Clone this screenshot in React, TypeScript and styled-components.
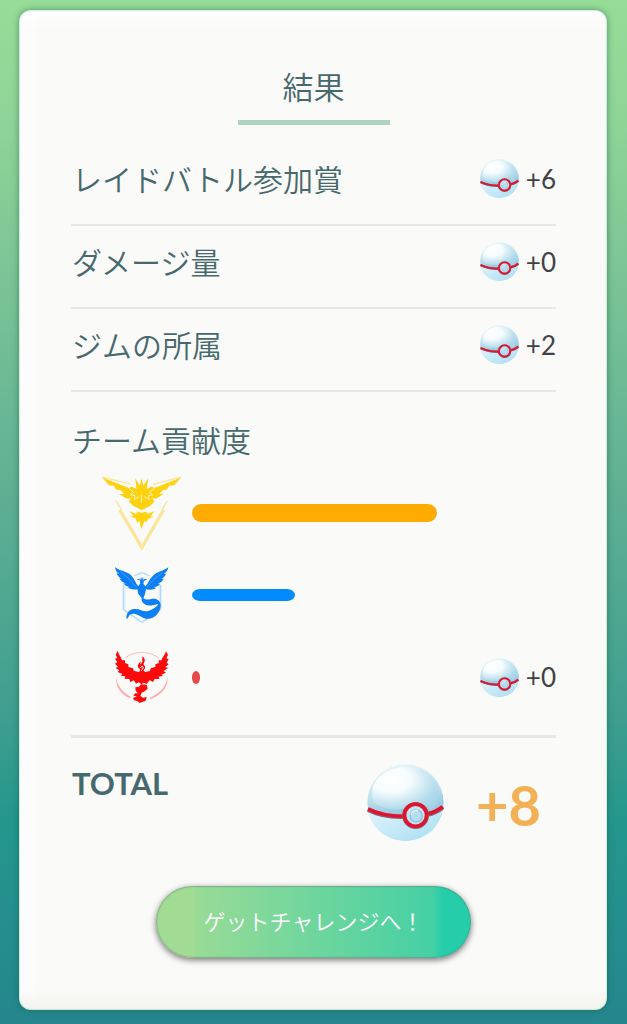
import React from 'react';
import styled, { createGlobalStyle } from 'styled-components';

const GlobalStyle = createGlobalStyle`
  * { box-sizing: border-box; }
  html { min-height: 100%; }
  body {
    margin: 0;
    min-height: 100vh;
    background: linear-gradient(180deg, #97dc97 0%, #8fd497 12%, #7fc796 24%, #5fb093 48%, #3f9e8f 70%, #24978d 80%, #25868d 100%) no-repeat;
    font-family: Lato, "Noto Sans CJK JP", sans-serif;
    color: #47696d;
  }
`;

const Card = styled.main`
  display: flex;
  flex-direction: column;
  margin: 10px 20px 14px 19px;
  padding: 56px 51px 48px 52px;
  min-height: calc(100vh - 24px);
  border-radius: 12px;
  background:
    linear-gradient(180deg, #ffffff 0, rgba(255, 255, 255, 0) 22px),
    linear-gradient(0deg, #f1f3ee 0, rgba(241, 243, 238, 0) 20px),
    linear-gradient(90deg, #fcfcfc 0, #fcfcfc 14px, rgba(252, 252, 252, 0) 20px),
    #fafaf8;
  box-shadow: 0 0 6px rgba(20, 90, 70, 0.55), inset 0 0 1px 1px rgba(190, 225, 205, 0.7);
`;

const Title = styled.h1`
  align-self: center;
  width: 152px;
  height: 59px;
  margin: 0 0 18px;
  border-bottom: 5px solid #aed3bf;
  font-size: 31px;
  line-height: 43px;
  font-weight: 350;
  text-align: center;
`;

const List = styled.ul`
  list-style: none;
  margin: 0;
  padding: 0;
`;

const RewardRow = styled.li`
  display: flex;
  align-items: center;
  justify-content: space-between;
  height: 83px;
  padding-bottom: 10px;
  border-bottom: 2px solid #e8e9e7;
`;

const Label = styled.span`
  padding-left: 1px;
  font-size: 30px;
  line-height: 44px;
  font-weight: 350;
`;

const Award = styled.span`
  display: flex;
  align-items: center;
  justify-content: flex-end;
  gap: 7px;
  color: #404244;
  font-size: 26px;
  line-height: 40px;
`;

const TeamSection = styled.section`
  padding: 26px 0 17px;
  border-bottom: 3px solid #e8e9e7;
`;

const SectionTitle = styled.h2`
  margin: 0 0 10px;
  padding-left: 1px;
  font-size: 30px;
  line-height: 44px;
  font-weight: 350;
`;

const TeamRow = styled.li`
  display: grid;
  grid-template-columns: 121px 1fr 86px;
  align-items: center;
  height: 82px;
`;

const Emblem = styled.span`
  display: flex;
  justify-content: center;
  padding-left: 20px;
`;

const Bar = styled.div<{ $color: string; $height: number; $radius: string }>`
  height: ${(p) => p.$height}px;
  border-radius: ${(p) => p.$radius};
  background: ${(p) => p.$color};
`;

const TotalRow = styled.section`
  display: flex;
  align-items: center;
  height: 128px;
  padding: 0 15px 0 1px;
`;

const TotalLabel = styled.h2`
  flex: 1;
  align-self: flex-start;
  margin: 25px 0 0;
  font-size: 31px;
  line-height: 40px;
  font-weight: 700;
`;

const TotalValue = styled.strong`
  margin-left: 32px;
  padding-top: 6px;
  color: #f3b055;
  font-size: 56px;
  line-height: 64px;
  font-weight: 700;
`;

const ActionButton = styled.button`
  align-self: center;
  width: 315px;
  max-width: 100%;
  height: 72px;
  margin-top: 20px;
  padding: 0;
  border: 0;
  border-radius: 36px;
  background: linear-gradient(90deg, #a2db94 0%, #a2db94 12%, #98db96 13%, #45d0a5 88%, #25cdaa 91%, #25cdaa 100%);
  box-shadow: 0 2px 6px rgba(0, 0, 0, 0.55), inset 0 0 1px 1px rgba(110, 130, 120, 0.5);
  color: #ffffff;
  font-family: inherit;
  font-size: 22px;
  line-height: 32px;
  font-weight: 350;
`;

function PremierBall({ size }: { size: number }) {
  const id = React.useId();
  return (
    <svg width={size} height={size} viewBox="0 0 230 230" aria-hidden="true">
      <defs>
        <radialGradient id={id + 'top'} cx="0.28" cy="0.3" r="0.85">
          <stop offset="0" stopColor="#ffffff" />
          <stop offset="0.35" stopColor="#f6fcfe" />
          <stop offset="0.8" stopColor="#b4dcec" />
          <stop offset="1" stopColor="#a6d4e7" />
        </radialGradient>
        <linearGradient id={id + 'rim'} x1="0.4" y1="0" x2="0.6" y2="1">
          <stop offset="0" stopColor="#e6f4f9" />
          <stop offset="0.35" stopColor="#c3e2ee" />
          <stop offset="0.6" stopColor="#9acbe1" />
          <stop offset="1" stopColor="#a9d5e7" />
        </linearGradient>
        <linearGradient id={id + 'low'} x1="0" y1="0.3" x2="0.8" y2="1">
          <stop offset="0" stopColor="#dcf1f9" />
          <stop offset="1" stopColor="#ace0f4" />
        </linearGradient>
      </defs>
      <circle cx="115" cy="115" r="114" fill={`url(#${id}rim)`} />
      <path d="M15 90C15 42 60 10 115 8C172 8 214 45 215 90C216 108 208 124 192 136C170 116 138 108 108 134C80 138 42 134 22 116C17 108 15 100 15 90Z" fill={`url(#${id}top)`} />
      <path d="M3 136C35 152 70 158 112 157L176 152C198 147 215 139 227 129C220 188 174 229 115 229C56 229 10 189 3 136Z" fill={`url(#${id}low)`} />
      <path d="M3 137C35 153 70 159 108 158M178 152C200 147 215 139 226 129" fill="none" stroke="#8a6076" strokeWidth="13" />
      <path d="M3 134C35 150 70 156 108 156M178 149C200 144 215 137 226 127" fill="none" stroke="#e0142f" strokeWidth="11" />
      <circle cx="145" cy="154" r="34" fill="#c2e4f1" stroke="#8a6076" strokeWidth="12" />
      <circle cx="145" cy="153" r="33" fill="#c2e4f1" stroke="#e0142f" strokeWidth="11" />
      <circle cx="147" cy="155" r="18" fill="#b5dfef" stroke="#8fc2da" strokeWidth="4" />
      <path d="M132 152A16 16 0 0 1 152 139" fill="none" stroke="#effaff" strokeWidth="4" />
    </svg>
  );
}

function InstinctEmblem() {
  return (
    <svg width="81" height="74" viewBox="32 38 244 222" aria-hidden="true">
      <g fill="none" stroke="#fbe596">
        <path d="M35 41L121 61M273 41L188 63M38 44L56 66M270 44L252 66" strokeWidth="4" />
        <path d="M77 112L93 138M232 112L217 138" strokeWidth="4" />
        <path d="M88 139L155 253L221 139" strokeWidth="10" stroke="#fae69b" />
      </g>
      <path fill="#ffd10f" d="M38 43L116 74L125 69L139 77L135 44L149 66L154 45L160 66L174 44L170 77L184 69L193 74L272 43L249 66L238 66L230 79L219 80L208 91L221 91L199 105L187 105L193 115L180 127L155 141L129 127L116 115L122 105L109 105L86 92L103 92L90 80L78 79L70 66L59 66Z" />
      <path fill="#ffd10f" d="M117 143L137 152L145 142L155 148L165 142L173 152L193 143L181 160H193L174 166L168 178L163 172L154 197L147 173L141 178L136 165L117 159H130Z" />
      <path fill="none" stroke="#fff3b8" strokeWidth="3" d="M116 75L131 87L121 94L135 97L132 109L147 100M193 75L178 87L188 94L174 97L178 109L163 100M154 94V119" />
      <path fill="none" stroke="#fffbe8" strokeWidth="3" d="M119 137L154 147L190 137" />
    </svg>
  );
}

function MysticEmblem() {
  return (
    <svg width="54" height="56" viewBox="44 38 162 168" aria-hidden="true">
      <path d="M69 91V165L125 204L181 165V91M103 64L125 55L148 64" fill="none" stroke="#aed9fc" strokeWidth="4" />
      <path d="M74 94V160M177 94V147" stroke="#d3eafe" strokeWidth="3" />
      <path fill="#0c7ff5" d="M44 39C60 51 82 51 94 65C103 75 106 87 114 96L120 87L118 78L108 75L117 73L119 79L122 67L125 76L128 67L130 79L132 73L141 75L131 80L129 88L135 96C144 87 147 73 158 64C170 52 189 50 204 39C203 49 196 55 191 59L197 58C195 66 188 71 182 74L190 73C186 82 178 86 172 88L180 88C173 96 165 98 160 99L168 101C158 108 147 106 137 105L134 119L129 132C145 142 158 127 173 137C187 147 180 169 171 179C160 195 136 197 123 187C112 180 98 174 89 181C83 186 86 191 78 193C78 177 86 165 101 164C119 162 128 174 143 170C155 167 171 157 174 149C158 152 146 158 132 149C124 144 123 136 124 131L114 119L111 105C99 107 88 104 81 99L89 99C80 97 72 92 69 87L77 88C66 84 60 78 57 72L66 74C55 69 50 62 49 56L57 60C49 55 45 47 44 39Z" />
      <path d="M61 52L91 78L108 99M187 53L157 79L140 99" fill="none" stroke="#5ba9f9" strokeWidth="2" />
    </svg>
  );
}

function ValorEmblem() {
  return (
    <svg width="54" height="54" viewBox="44 35 162 162" aria-hidden="true">
      <path d="M75 59C99 37 148 36 175 60" fill="none" stroke="#ffb9bd" strokeWidth="3" />
      <path d="M47 116C51 143 68 163 91 175L90 180C63 170 46 147 47 116ZM202 116C198 143 181 164 149 178L149 183C184 170 204 147 202 116Z" fill="#ffa8ad" />
      <path fill="#fe0909" d="M52 37C55 50 64 57 65 66L74 66L74 74L84 78L84 86L98 90L100 97L115 101C121 98 120 92 114 88C110 82 115 76 121 69L120 79L126 70L126 54C134 60 136 67 130 75C127 81 137 82 134 90L130 96L134 101L149 98L151 90L165 86L165 78L176 74L175 66L184 66C185 56 195 50 197 38L203 50L198 60L205 62L199 73L205 78L195 86L203 89L190 98L197 103L183 109L188 113L174 115L178 122L163 122L158 131L148 126L139 137L130 133L124 138L115 132L107 136L101 126L90 131L87 122L72 121L75 114L61 112L66 107L52 101L57 96L46 89L53 85L44 76L51 72L44 61L51 59L46 49Z" />
      <path fill="#fe0909" d="M122 138L139 139L142 151L133 159L124 163L120 173L128 178L139 176L136 187L118 194L111 188L101 186L98 178L109 175L99 171L105 165L113 165L106 157L105 147L116 145Z" />
      <path d="M119 89L126 83L129 89L122 98" fill="none" stroke="#fff0ef" strokeWidth="3" />
    </svg>
  );
}

const rewards = [
  { label: 'レイドバトル参加賞', value: '+6' },
  { label: 'ダメージ量', value: '+0' },
  { label: 'ジムの所属', value: '+2' },
];

const teams = [
  { id: 'instinct', emblem: <InstinctEmblem />, color: '#ffab00', height: 18, radius: '9px', share: 88, award: '' },
  { id: 'mystic', emblem: <MysticEmblem />, color: '#008cff', height: 12, radius: '8px / 50%', share: 37, award: '' },
  { id: 'valor', emblem: <ValorEmblem />, color: '#e54a4d', height: 13, radius: '50%', share: 3, award: '+0' },
];

export default function App() {
  return (
    <>
      <GlobalStyle />
      <Card>
        <Title>結果</Title>
        <List>
          {rewards.map((r) => (
            <RewardRow key={r.label}>
              <Label>{r.label}</Label>
              <Award><PremierBall size={39} />{r.value}</Award>
            </RewardRow>
          ))}
        </List>
        <TeamSection>
          <SectionTitle>チーム貢献度</SectionTitle>
          <List>
            {teams.map((t) => (
              <TeamRow key={t.id}>
                <Emblem>{t.emblem}</Emblem>
                <Bar $color={t.color} $height={t.height} $radius={t.radius} style={{ width: `${t.share}%` }} />
                {t.award && <Award><PremierBall size={39} />{t.award}</Award>}
              </TeamRow>
            ))}
          </List>
        </TeamSection>
        <TotalRow>
          <TotalLabel>TOTAL</TotalLabel>
          <PremierBall size={77} />
          <TotalValue>+8</TotalValue>
        </TotalRow>
        <ActionButton type="button">ゲットチャレンジへ！</ActionButton>
      </Card>
    </>
  );
}
